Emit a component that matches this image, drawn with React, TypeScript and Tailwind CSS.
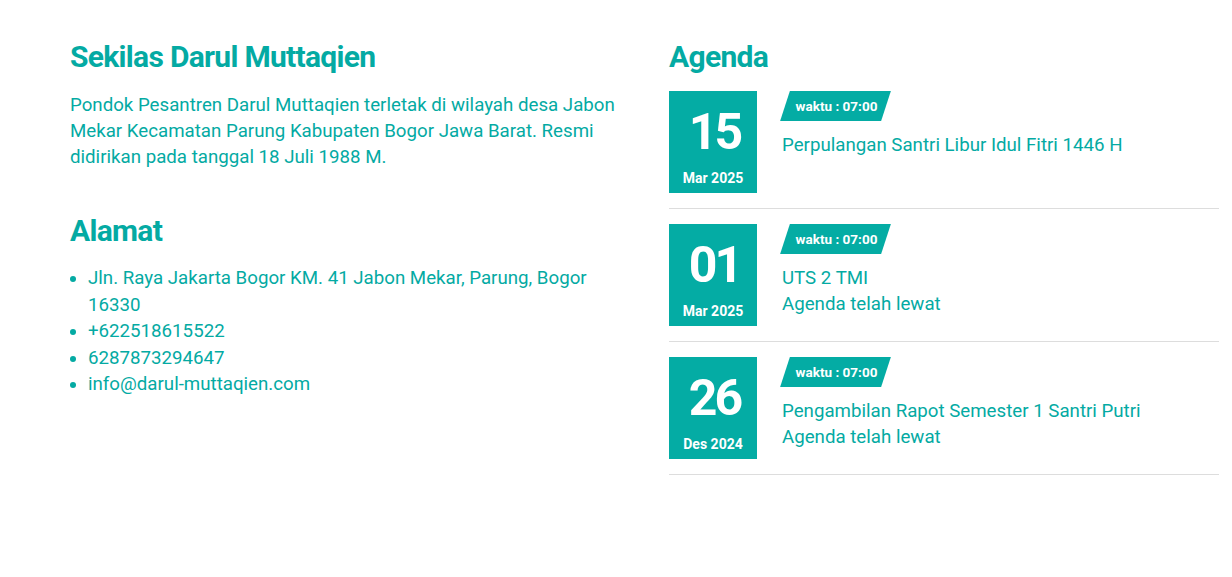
import React from "react";

const items = [
  { day: "15", month: "Mar 2025", title: "Perpulangan Santri Libur Idul Fitri 1446 H", past: false },
  { day: "01", month: "Mar 2025", title: "UTS 2 TMI", past: true },
  { day: "26", month: "Des 2024", title: "Pengambilan Rapot Semester 1 Santri Putri", past: true },
];

export default function App() {
  return (
    <div
      className="w-[1232px] h-[577px] bg-white text-[#04aaa3] flex pl-[70px] pt-[40px]"
      style={{ fontFamily: "Roboto, 'Noto Sans', Arial, sans-serif" }}
    >
      <div className="w-[570px] shrink-0">
        <h2 className="text-[30px] leading-[34px] font-bold tracking-[-0.7px]">Sekilas Darul Muttaqien</h2>
        <p className="mt-[18px] text-[18.7px] leading-[26px] pr-[10px]">
          Pondok Pesantren Darul Muttaqien terletak di wilayah desa Jabon Mekar Kecamatan Parung Kabupaten Bogor Jawa
          Barat. Resmi didirikan pada tanggal 18 Juli 1988 M.
        </p>
        <h2 className="mt-[44px] text-[30px] leading-[34px] font-bold tracking-[-0.7px]">Alamat</h2>
        <ul className="mt-[17px] list-disc pl-[18px] text-[18.7px] leading-[26.5px]">
          <li>Jln. Raya Jakarta Bogor KM. 41 Jabon Mekar, Parung, Bogor 16330</li>
          <li>+622518615522</li>
          <li>6287873294647</li>
          <li>info@darul-muttaqien.com</li>
        </ul>
      </div>
      <div className="ml-[29px] w-[550px] shrink-0">
        <h2 className="text-[30px] leading-[34px] font-bold tracking-[-0.7px]">Agenda</h2>
        <div className="mt-[17px] flex flex-col">
          {items.map((it, i) => (
            <div key={i} className={`flex pb-[15px] border-b border-[#dddddd] ${i > 0 ? "pt-[15px]" : ""}`}>
              <div className="w-[88px] h-[102px] bg-[#04aca4] text-white flex flex-col items-center shrink-0">
                <div className="mt-[16px] text-[50px] leading-[50px] font-bold tracking-[-3px] pl-[3px]">{it.day}</div>
                <div className="mt-[13px] text-[14px] leading-[16px] font-bold">{it.month}</div>
              </div>
              <div className="ml-[25px] flex flex-col items-start">
                <div className="relative h-[30px] w-[101px] ml-[3px]">
                  <div className="absolute inset-0 bg-[#04aca4] -skew-x-[18deg]" />
                  <span className="absolute inset-0 flex items-center justify-center pl-[2px] text-white text-[13.5px] font-bold">
                    waktu : 07:00
                  </span>
                </div>
                <div className="mt-[11px] text-[18.7px] leading-[26px]">{it.title}</div>
                {it.past && <div className="text-[18.7px] leading-[26px]">Agenda telah lewat</div>}
              </div>
            </div>
          ))}
        </div>
      </div>
    </div>
  );
}
